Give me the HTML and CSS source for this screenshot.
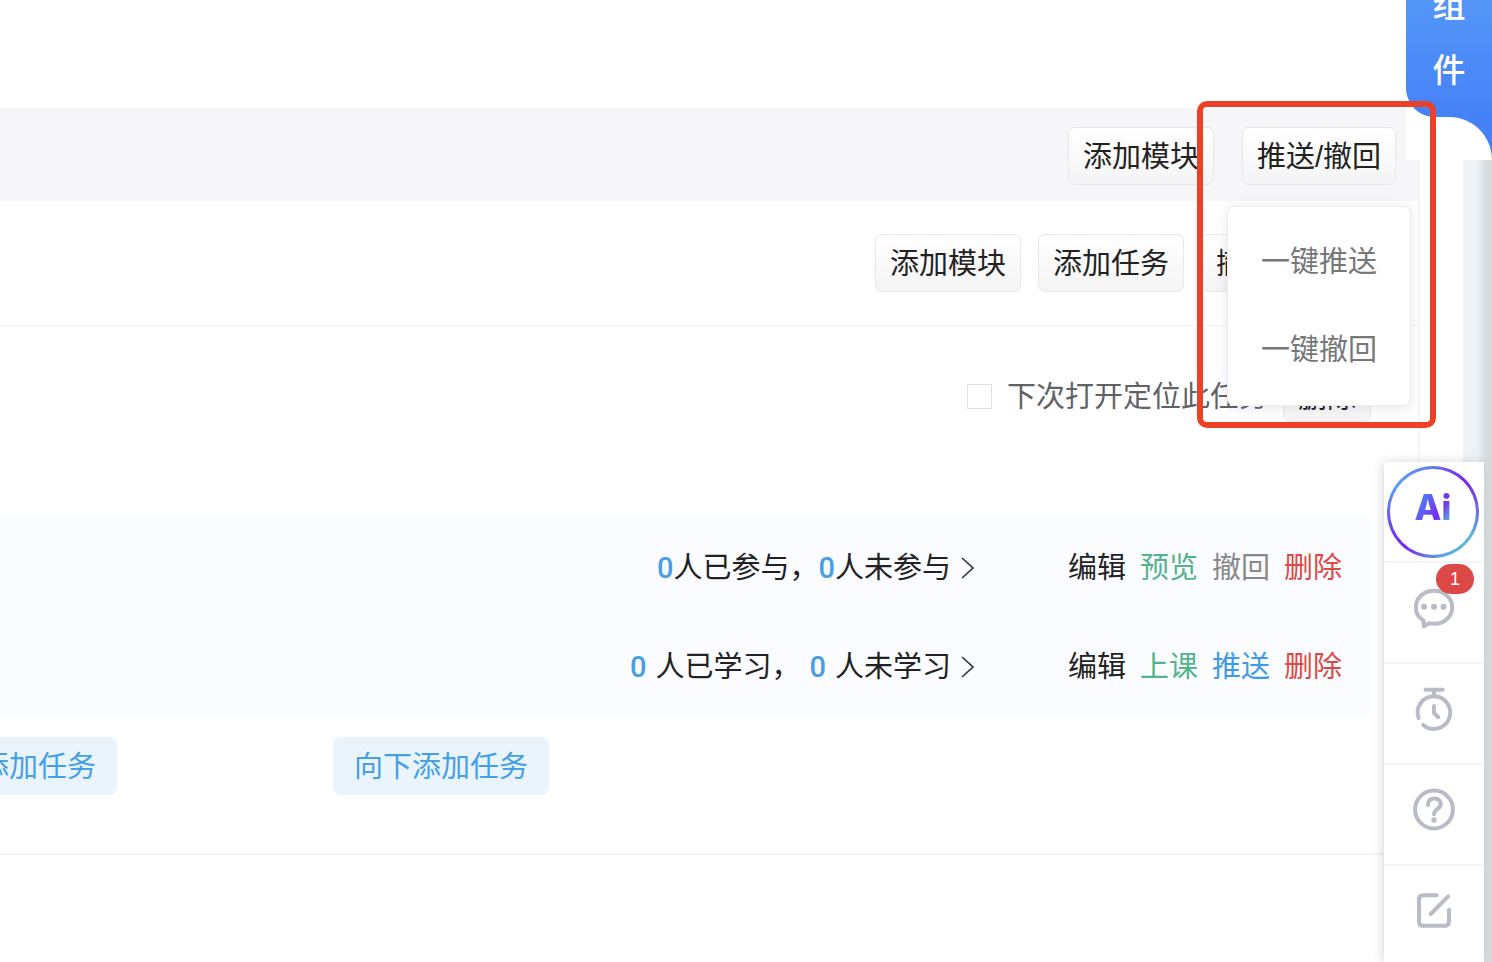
FILE: index.html
```html
<!DOCTYPE html>
<html lang="zh-CN">
<head>
    <meta charset="UTF-8">
    <meta name="viewport" content="width=device-width, initial-scale=1.0">
    <title>课程任务</title>
    <link rel="stylesheet" href="styles.css">
</head>
<body>
    <div class="page">
        <main class="panel">
            <!-- Chapter bar -->
            <header class="chapter-bar">
                <button class="btn">添加模块</button>
                <div class="dropdown">
                    <button class="btn">推送/撤回</button>
                    <div class="dropdown-menu">
                        <button class="dropdown-item">一键推送</button>
                        <button class="dropdown-item">一键撤回</button>
                    </div>
                </div>
            </header>

            <div class="module-bar">
                <button class="btn">添加模块</button>
                <button class="btn">添加任务</button>
                <button class="btn">撤回</button>
            </div>

            <div class="task-bar">
                <input type="checkbox" id="locate" class="check">
                <label for="locate">下次打开定位此任务</label>
                <button class="btn btn-small">删除</button>
            </div>

            <!-- Activities -->
            <section class="activities">
                <div class="activity">
                    <a href="#" class="stats">
                        <b>0</b><span>人已参与，</span><b>0</b><span>人未参与</span>
                        <svg class="arrow" viewBox="0 0 14 24"><path d="M2 2L13 12L2 22"/></svg>
                    </a>
                    <div class="actions">
                        <a href="#">编辑</a>
                        <a href="#" class="green">预览</a>
                        <a href="#" class="gray">撤回</a>
                        <a href="#" class="red">删除</a>
                    </div>
                </div>
                <div class="activity">
                    <a href="#" class="stats spaced">
                        <b>0</b><span>人已学习，</span><b>0</b><span>人未学习</span>
                        <svg class="arrow" viewBox="0 0 14 24"><path d="M2 2L13 12L2 22"/></svg>
                    </a>
                    <div class="actions">
                        <a href="#">编辑</a>
                        <a href="#" class="green">上课</a>
                        <a href="#" class="blue">推送</a>
                        <a href="#" class="red">删除</a>
                    </div>
                </div>
            </section>

            <div class="add-bar">
                <button class="btn-add">向上添加任务</button>
                <button class="btn-add">向下添加任务</button>
            </div>
        </main>
        <div class="edge"></div>
    </div>

    <!-- Component tab -->
    <a href="#" class="component-tab">
        <svg viewBox="0 0 86 160">
            <defs>
                <linearGradient id="tabFill" x1="0" y1="0" x2="0" y2="1">
                    <stop offset="0" stop-color="#5496f8"/>
                    <stop offset="0.7" stop-color="#4682f7"/>
                    <stop offset="1" stop-color="#4682f7"/>
                </linearGradient>
            </defs>
            <path fill="url(#tabFill)" d="M0 0V87C0 104 12 117 30 117H43C67 117 86 136 86 160V0Z"/>
        </svg>
        <span>组件</span>
    </a>

    <!-- Floating tools -->
    <nav class="tools">
        <button class="tool" aria-label="AI">
            <span class="ai-ring"><span class="ai-text">Ai</span></span>
        </button>
        <button class="tool" aria-label="消息">
            <svg viewBox="0 0 100 99">
                <path d="M39.500 57.500C34.500 54.500 31.800 49.800 31.800 44.300C31.800 35 39.800 27.700 50 27.700S68.200 35 68.200 44.300S60.500 60.800 50.500 60.800C48.500 60.800 46.500 60.500 45 60.300L39.800 63.200Z"/>
                <g class="solid"><circle cx="40" cy="43.700" r="3"/><circle cx="50" cy="43.700" r="3"/><circle cx="59.500" cy="43.700" r="3"/></g>
            </svg>
            <span class="badge">1</span>
        </button>
        <button class="tool" aria-label="计时">
            <svg viewBox="0 0 100 99">
                <path d="M41.500 25.700H58.700M50 26V32M34.600 54.200A16.300 16.300 0 1 1 39.200 60.900M50 42V49L54.300 53.200"/>
            </svg>
        </button>
        <button class="tool" aria-label="帮助">
            <svg viewBox="0 0 100 99">
                <circle cx="50" cy="44.500" r="18.900"/>
                <path d="M44 40C44 35.500 46.500 33.400 50.200 33.400C54 33.400 56.700 35.800 56.700 39.200C56.700 43.600 50 44.200 50 49.300"/>
                <circle class="solid" cx="50" cy="55" r="2.700"/>
            </svg>
        </button>
        <button class="tool" aria-label="反馈">
            <svg viewBox="0 0 100 99">
                <path d="M52.500 29.200H39Q35 29.200 35 33.200V55.800Q35 59.800 39 59.800H61Q65 59.800 65 55.800V43.800M46.700 48L64.200 30.400"/>
            </svg>
        </button>
    </nav>

    <div class="highlight"></div>
</body>
</html>
```

FILE: styles.css
```css
* {
    box-sizing: border-box;
}
body {
    margin: 0;
    height: 100vh;
    overflow: hidden;
    position: relative;
    background: #fff;
    color: #222;
    font-family: "Liberation Sans", "Noto Sans CJK SC", sans-serif;
    font-size: 29px;
    line-height: 40px;
}
button {
    font: inherit;
    color: inherit;
    cursor: pointer;
}
a {
    color: inherit;
    text-decoration: none;
}
.page {
    display: flex;
    gap: 43px;
    min-height: 100vh;
}
.panel {
    flex: 1;
    min-width: 0;
    padding-top: 108px;
}
.edge {
    width: 29px;
    background: linear-gradient(to right, #eff4f9 0, #edf2f6 14px, #d9dee1 22px, #d5d9dc 29px);
}

.btn {
    height: 58px;
    padding: 2px 14px 0;
    border: 1px solid #e8e8e8;
    border-radius: 7px;
    background: linear-gradient(#fff, #f4f4f4);
    white-space: nowrap;
}
.btn-small {
    height: 50px;
}

.chapter-bar {
    display: flex;
    justify-content: flex-end;
    align-items: center;
    gap: 28px;
    height: 93px;
    padding: 2px 24px 0 0;
    background: #f6f6f8;
}
.dropdown {
    position: relative;
}
.dropdown-menu {
    position: absolute;
    top: 100%;
    left: 50%;
    z-index: 2;
    width: 184px;
    margin: 21px 0 0 -92px;
    padding: 11px 0;
    border: 1px solid #ebebf2;
    border-radius: 7px;
    background: #fff;
    box-shadow: 0 2px 12px rgba(60, 60, 100, 0.12);
}
.dropdown-item {
    display: block;
    width: 100%;
    height: 88px;
    padding: 0;
    border: 0;
    background: none;
    color: #777;
}

.module-bar {
    display: flex;
    justify-content: flex-end;
    gap: 17px;
    padding: 33px 129px 33px 0;
    border-right: 2px solid #f6f6f8;
    border-bottom: 1px solid #f4f4f5;
}
.task-bar {
    display: flex;
    justify-content: flex-end;
    align-items: center;
    gap: 15px;
    height: 191px;
    padding: 0 47px 50px 0;
    border-right: 2px solid #f6f6f8;
    color: #606266;
}
.task-bar .btn {
    color: #222;
}
.check {
    appearance: none;
    width: 25px;
    height: 25px;
    margin: 0;
    border: 1px solid #dcdfe6;
    background: #fff;
}

.activities {
    margin-right: 49px;
    background: #fbfcff;
}
.activity {
    display: flex;
    justify-content: flex-end;
    align-items: center;
    gap: 94px;
    height: 99px;
    padding: 2px 29px 0 0;
}
.stats {
    display: flex;
    align-items: center;
}
.stats b {
    color: #479fe6;
    font-family: Roboto, sans-serif;
    font-weight: 500;
}
.spaced b {
    margin: 0 9px;
}
.arrow {
    width: 14px;
    height: 24px;
    margin-left: 9px;
    fill: none;
    stroke: #333;
    stroke-width: 1.6;
}
.actions {
    display: flex;
    gap: 14px;
}
.green {
    color: #52b48c;
}
.gray {
    color: #888;
}
.blue {
    color: #3f9bea;
}
.red {
    color: #db4a45;
}

.add-bar {
    display: flex;
    gap: 216px;
    margin-left: -99px;
    margin-right: -43px;
    padding: 22px 0 58px;
    border-bottom: 2px solid #f4f4f5;
}
.btn-add {
    width: 216px;
    height: 58px;
    padding: 2px 0 0;
    border: 0;
    border-radius: 8px;
    background: #e9f4fd;
    color: #479fe6;
}

.component-tab {
    position: absolute;
    top: 0;
    right: 0;
    width: 86px;
    height: 160px;
    overflow: hidden;
    background: #fff;
    color: #fff;
    font-size: 33px;
    font-weight: 500;
    line-height: 65px;
}
.component-tab svg {
    position: absolute;
    inset: 0;
}
.component-tab span {
    position: relative;
    display: block;
    width: 33px;
    margin: -27px auto 0;
}

.tools {
    position: absolute;
    top: 462px;
    right: 8px;
    bottom: 0;
    width: 100px;
    background: #fff;
    box-shadow: -2px 0 10px rgba(0, 0, 0, 0.14);
}
.tool {
    position: relative;
    display: block;
    width: 100%;
    height: 101px;
    padding: 0;
    border: 0;
    border-bottom: 2px solid #f4f5fa;
    background: none;
}
.tool svg {
    display: block;
    width: 100px;
    height: 99px;
    fill: none;
    stroke: #b9bcc6;
    stroke-width: 4;
    stroke-linecap: round;
    stroke-linejoin: round;
}
.tool .solid {
    fill: #b9bcc6;
    stroke: none;
}
.ai-ring {
    display: block;
    width: 92px;
    height: 92px;
    margin: 0 3px;
    padding: 3px;
    border-radius: 50%;
    background: conic-gradient(#5f7cf0, #7a1ff0 45deg, #6f5be8 80deg, #5bbbd6 125deg, #5aa8e0 170deg, #7a1ff0 220deg, #6a50f0 255deg, #5aa0f5 305deg, #5f7cf0);
}
.ai-text {
    display: block;
    height: 86px;
    border-radius: 50%;
    background: linear-gradient(120deg, #4f7df5 35%, #7a2cf0 55%, #55b8d8 66%) text, linear-gradient(#fff, #fff);
    color: transparent;
    font-family: Inter, sans-serif;
    font-size: 35px;
    font-weight: 800;
    line-height: 76px;
}
.badge {
    position: absolute;
    top: 1px;
    right: 10px;
    width: 38px;
    height: 30px;
    border-radius: 15px;
    background: #dc4845;
    color: #fff;
    font-size: 18px;
    line-height: 30px;
}

.highlight {
    position: absolute;
    top: 101px;
    right: 56px;
    width: 239px;
    height: 327px;
    border: 6px solid #ec4127;
    border-radius: 10px;
    pointer-events: none;
    z-index: 3;
}
```
